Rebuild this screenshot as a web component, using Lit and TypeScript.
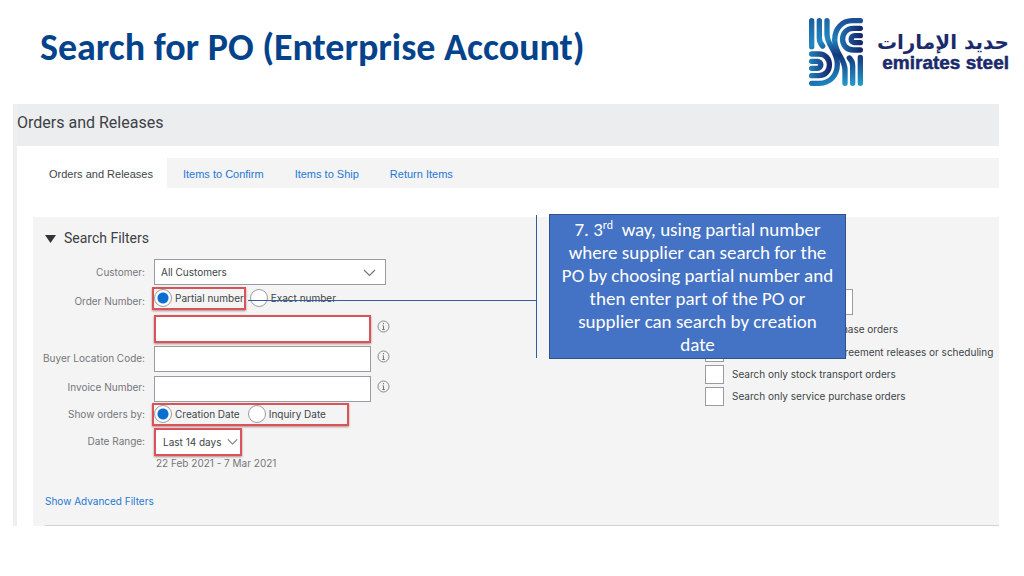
import { LitElement, html, css } from "lit";
import { customElement, property } from "lit/decorators.js";

@customElement("brand-logo")
class BrandLogo extends LitElement {
  static styles = css`
    :host { display: flex; align-items: center; gap: 14px; color: #1b2a6b; }
    svg { display: block; width: 54px; height: 68px; flex: none; }
    .names { display: flex; flex-direction: column; font-weight: 700; white-space: nowrap; text-align: right; }
    .ar { font: 700 20px/22px "DejaVu Sans", sans-serif; }
    .en { font: 700 19px/20px "Liberation Sans", sans-serif; -webkit-text-stroke: 0.5px #1b2a6b; }
  `;
  render() {
    return html`
      <svg viewBox="13 12 162 204" aria-hidden="true" fill="none" stroke-width="16" stroke-linecap="round">
        <defs>
          <linearGradient id="a" gradientUnits="userSpaceOnUse" x1="20" y1="18" x2="90" y2="208">
            <stop offset="0" stop-color="#1c5f9f" /><stop offset=".35" stop-color="#2389c0" />
            <stop offset=".6" stop-color="#15377f" /><stop offset="1" stop-color="#1f8cc4" />
          </linearGradient>
          <linearGradient id="b" gradientUnits="userSpaceOnUse" x1="120" y1="18" x2="130" y2="210">
            <stop offset="0" stop-color="#1a4d93" /><stop offset=".3" stop-color="#2380bb" /><stop offset=".55" stop-color="#14347c" />
            <stop offset="1" stop-color="#2596ca" />
          </linearGradient>
          <linearGradient id="c" gradientUnits="userSpaceOnUse" x1="100" y1="0" x2="168" y2="0">
            <stop offset="0" stop-color="#1f78b4" /><stop offset="1" stop-color="#15296f" />
          </linearGradient>
          <linearGradient id="d" gradientUnits="userSpaceOnUse" x1="20" y1="0" x2="75" y2="0">
            <stop offset="0" stop-color="#1f78b4" /><stop offset="1" stop-color="#15296f" />
          </linearGradient>
        </defs>
        <path stroke="url(#a)" d="M21 20V98M44 20V72Q44 86 54 96M67 20V60C67 95 98 110 98 150C98 185 75 208 45 208H21" />
        <path stroke="url(#b)" d="M121 208V168C121 133 90 118 90 78C90 43 113 20 143 20H167M144 208V156Q144 142 134 132M167 208V130" />
        <path stroke="url(#c)" d="M167 43H146C103 43 103 108 146 108H167M167 65H150a10 10 0 0 0 0 21H167" />
        <path stroke="url(#d)" d="M21 185H42C85 185 85 120 42 120H21M21 163H38a10 10 0 0 0 0-21H21" />
      </svg>
      <div class="names">
        <span class="ar" lang="ar" dir="rtl">حديد الإمارات</span>
        <span class="en">emirates steel</span>
      </div>`;
  }
}

@customElement("info-mark")
class InfoMark extends LitElement {
  static styles = css`:host { display: block; } svg { display: block; width: 13px; height: 13px; }`;
  render() {
    return html`<svg viewBox="0 0 13 13" aria-hidden="true">
      <circle cx="6.5" cy="6.5" r="5.5" fill="none" stroke="#888" />
      <path d="M6.5 3v1.3M5.5 5.8h1v3.7M5.2 9.5h2.6" fill="none" stroke="#777" />
    </svg>`;
  }
}

@customElement("app-root")
export class AppRoot extends LitElement {
  @property({ type: Array }) tabs = ["Orders and Releases", "Items to Confirm", "Items to Ship", "Return Items"];
  @property({ type: Array }) limits = [
    "Search only direct purchase orders",
    "Search only contract agreement releases or scheduling",
    "Search only stock transport orders",
    "Search only service purchase orders",
  ];

  static styles = css`
    :host { display: block; background: #fff; color: #404448; font: 11px/16px Roboto, "Liberation Sans", Arial, sans-serif; }
    * { box-sizing: border-box; }
    .top { display: flex; justify-content: space-between; align-items: center; height: 104px; padding: 0 15px 0 40px; }
    h1 { margin: 0 0 10px; font: 700 38px/44px Carlito, Calibri, "Open Sans", sans-serif; color: #04438c; font-variant-ligatures: none; }
    .app { margin: 0 25px 0 13px; border-left: 4px solid #eeeff0; }
    h2 { margin: 0; height: 42px; padding: 8px 0 0; font-size: 16px; line-height: 22px; font-weight: 400; background: #ecedef; color: #3c4146; }
    .body { padding: 12px 0 0 16px; }
    .tabs { display: flex; gap: 1px; height: 30px; background: #f4f4f4; font-family: "Liberation Sans", Arial, sans-serif; }
    .tabs a { display: flex; align-items: center; padding: 2px 15px 0; color: #1f78d2; text-decoration: none; }
    .tabs a.on { background: #fff; color: #404448; padding: 2px 14px 0 16px; }
    .panel { position: relative; margin-top: 29px; background: #f4f4f4; padding: 12px 0 0 12px; }
    h3 { display: flex; align-items: center; gap: 8px; margin: 0; font-size: 14px; line-height: 18px; font-weight: 400; color: #3c4146; }
    h3 svg { width: 11px; height: 9px; }
    .cols { display: flex; justify-content: space-between; align-items: flex-start; margin-top: 12px; }
    .cols, .foot { font-family: Inter, Roboto, sans-serif; font-size: 10px; }
    .form { display: grid; grid-template-columns: 100px auto; column-gap: 9px; align-items: center;
      grid-template-rows: 26px 26px 32px 29px 30px 24px 30px 14px; }
    .form > label, .form > .lab { justify-self: end; color: #74777a; white-space: nowrap; }
    .form > label.low { padding-top: 6px; }
    .form > .dates { color: #74777a; padding-left: 2px; }
    .line { display: flex; align-items: center; align-self: end; gap: 6px; }
    .line info-mark { margin-bottom: 5px; }
    .form select, .text { font: inherit; color: #404448; background: #fff; border: 1px solid #999c9f; border-radius: 0; margin: 0; padding: 0 6px; height: 26px; appearance: none; outline: 0; }
    .wrap { position: relative; display: block; }
    .wrap select { display: block; }
    .wrap svg { position: absolute; right: 10px; top: 10px; width: 13px; height: 8px; pointer-events: none; }
    .wrap.small svg { right: 4px; width: 11px; }
    .text { width: 217px; }
    .customer { width: 232px; }
    .form .range { width: 88px; padding: 0 7px; }
    .text.hot, .form .range { border: 2px solid #d9535a; box-shadow: 0 1px 2px #b8888a; height: 28px; }
    .radios { display: flex; align-items: center; height: 23px; margin-left: -2px; gap: 4px; }
    .mark { display: flex; align-items: center; height: 23px; border: 2px solid #d9535a; box-shadow: 0 1px 2px #b8888a; gap: 8px; }
    .mark.wide { width: 197px; }
    .opt { display: flex; align-items: center; gap: 3px; white-space: nowrap; }
    .opt input { appearance: none; width: 18px; height: 18px; margin: 0; border: 1px solid #999c9f; border-radius: 50%; background: #fff; }
    .opt input:checked { background: radial-gradient(circle, #0a6ed1 5px, #fff 6px); }
    .side { width: 294px; margin-top: 30px; }
    .side select { width: 148px; height: 26px; border: 1px solid #999c9f; border-radius: 0; background: #fff; display: block; appearance: none; }
    .checks { display: grid; gap: 2px; margin-top: 3px; }
    .checks label { display: flex; gap: 8px; height: 20px; align-items: center; white-space: nowrap; }
    .checks label:first-child { height: 22px; }
    .checks input { appearance: none; flex: none; width: 19px; height: 19px; margin: 0; border: 1px solid #999c9f; background: #fff; }
    .foot { margin-top: 23px; padding-bottom: 16px; border-bottom: 1px solid #d0d2d4; }
    .foot a { display: block; width: max-content; color: #1f78d2; text-decoration: none; }
    .callout { position: absolute; left: 516px; top: -3px; width: 297px; height: 145px; padding: 3px 10px; background: #4472c4; border: 1px solid #2f528f;
      color: #fff; text-align: center; font: 19px/23px Carlito, Calibri, "Open Sans", sans-serif; font-variant-ligatures: none; }
    .callout sup { font-size: 12px; line-height: 0; }
    .bar { position: absolute; left: 503px; top: -2px; width: 1px; height: 143px; background: #2f5f9f; }
    .lead { position: absolute; left: 215px; top: 83px; width: 288px; height: 1px; background: #2f5f9f; }
  `;

  chevron() {
    return html`<svg viewBox="0 0 13 8" aria-hidden="true"><path d="M1 1l5.5 5.5L12 1" fill="none" stroke="#777" stroke-width="1.2" /></svg>`;
  }

  render() {
    return html`
      <header class="top"><h1>Search for PO (Enterprise Account)</h1><brand-logo></brand-logo></header>
      <main class="app">
        <h2>Orders and Releases</h2>
        <div class="body">
          <nav class="tabs">${this.tabs.map((t, i) => html`<a href="#" class=${i ? "" : "on"}>${t}</a>`)}</nav>
          <section class="panel">
            <h3><svg viewBox="0 0 11 9" aria-hidden="true"><path d="M0 1h11L5.5 9z" fill="#32363a" /></svg>Search Filters</h3>
            <div class="cols">
              <div class="form">
                <label for="customer">Customer:</label>
                <div class="line"><span class="wrap"><select id="customer" class="customer"><option>All Customers</option></select>${this.chevron()}</span></div>
                <label class="low" for="order">Order Number:</label>
                <div class="radios">
                  <span class="mark"><label class="opt"><input type="radio" name="match" checked />Partial number</label></span>
                  <label class="opt"><input type="radio" name="match" />Exact number</label>
                </div>
                <span></span>
                <div class="line"><input id="order" class="text hot" type="text" /><info-mark></info-mark></div>
                <label for="buyer">Buyer Location Code:</label>
                <div class="line"><input id="buyer" class="text" type="text" /><info-mark></info-mark></div>
                <label for="invoice">Invoice Number:</label>
                <div class="line"><input id="invoice" class="text" type="text" /><info-mark></info-mark></div>
                <span class="lab">Show orders by:</span>
                <div class="radios"><span class="mark wide">
                  <label class="opt"><input type="radio" name="by" checked />Creation Date</label>
                  <label class="opt"><input type="radio" name="by" />Inquiry Date</label>
                </span></div>
                <label for="range">Date Range:</label>
                <div class="line"><span class="wrap small"><select id="range" class="range"><option>Last 14 days</option></select>${this.chevron()}</span></div>
                <span></span><span class="dates">22 Feb 2021 - 7 Mar 2021</span>
              </div>
              <div class="side">
                <select aria-label="Status"></select>
                <div class="checks">${this.limits.map((t) => html`<label><input type="checkbox" />${t}</label>`)}</div>
              </div>
            </div>
            <div class="foot"><a href="#">Show Advanced Filters</a></div>
            <div class="lead"></div>
            <div class="bar"></div>
            <div class="callout">7. 3<sup>rd</sup>&nbsp; way, using partial number where supplier can search for the PO by choosing partial number and then enter part of the PO or supplier can search by creation date</div>
          </section>
        </div>
      </main>`;
  }
}
